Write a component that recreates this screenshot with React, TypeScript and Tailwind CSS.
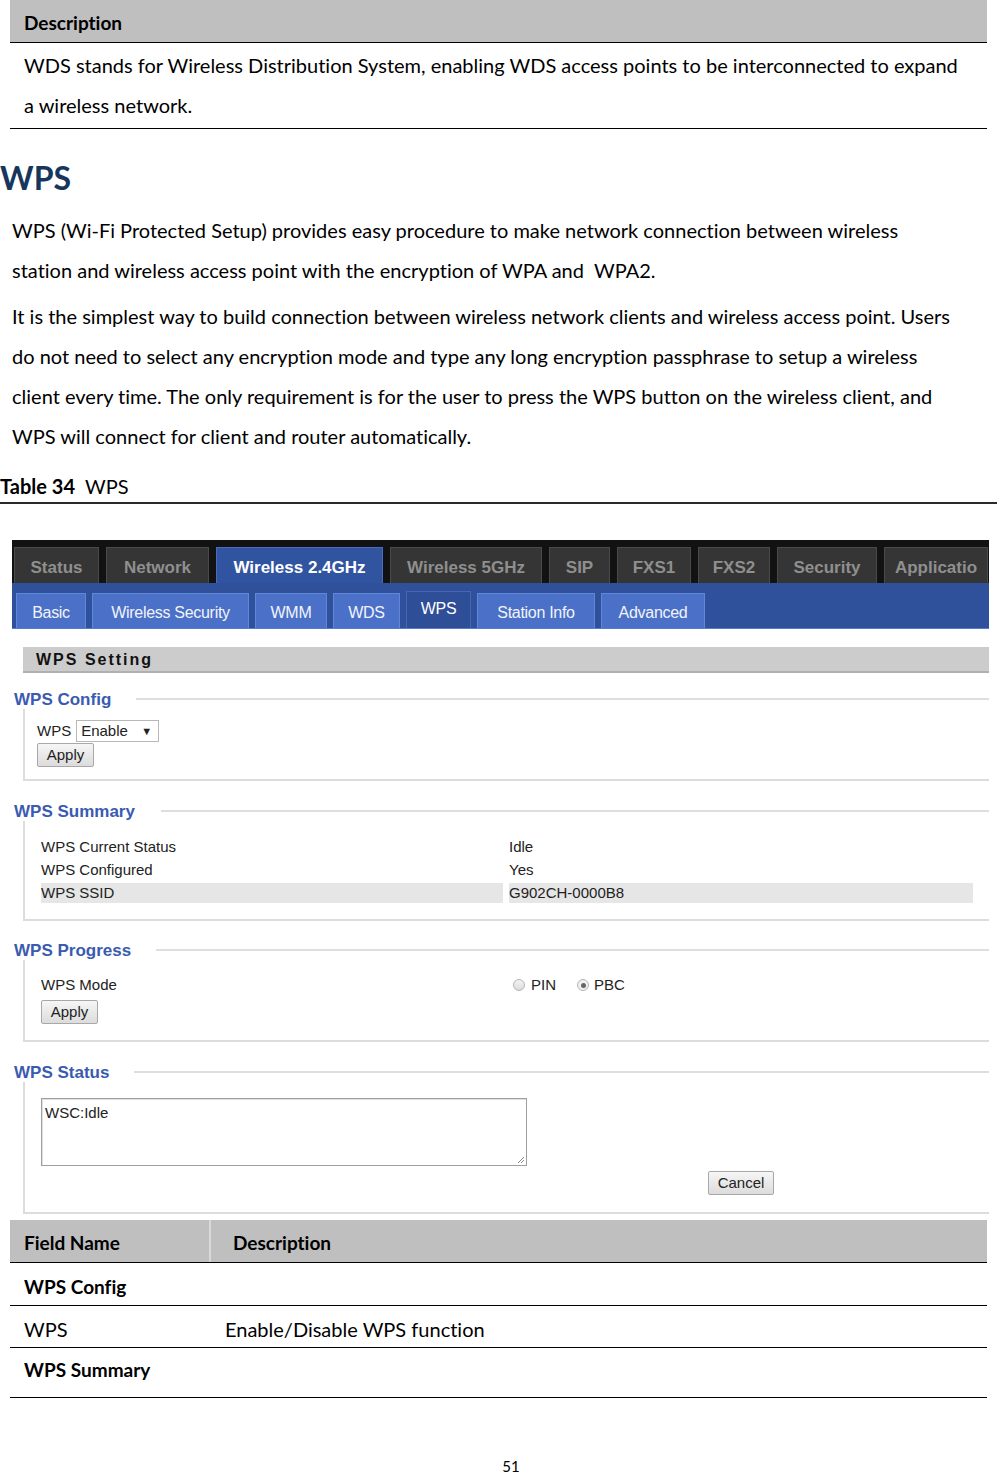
import React from "react"

const doc = { fontFamily: "Lato, 'Noto Sans', sans-serif" }
const ui = { fontFamily: "'Liberation Sans', Arial, sans-serif" }

const topTabs = [
  { label: "Status", w: "w-[85px]" },
  { label: "Network", w: "w-[103px]" },
  { label: "Wireless 2.4GHz", w: "w-[167px]", active: true },
  { label: "Wireless 5GHz", w: "w-[152px]" },
  { label: "SIP", w: "w-[61px]" },
  { label: "FXS1", w: "w-[74px]" },
  { label: "FXS2", w: "w-[72px]" },
  { label: "Security", w: "w-[100px]" },
  { label: "Applicatio", w: "w-[104px]" },
]

const subTabs = [
  { label: "Basic", w: "w-[70px]" },
  { label: "Wireless Security", w: "w-[157px]" },
  { label: "WMM", w: "w-[72px]" },
  { label: "WDS", w: "w-[67px]" },
  { label: "WPS", w: "w-[65px]", active: true },
  { label: "Station Info", w: "w-[118px]" },
  { label: "Advanced", w: "w-[104px]" },
]

function Legend({ title, lineGap }: { title: string; lineGap: string }) {
  return (
    <div className="flex items-center h-[20px]">
      <span className="pl-[2px] text-[17px] font-bold text-[#3a5bb0] leading-none">{title}</span>
      <div className={`flex-1 h-[2px] bg-[#dedede] ${lineGap}`}></div>
    </div>
  )
}

function Btn({ label, w }: { label: string; w: string }) {
  return (
    <div
      className={`h-[24px] ${w} flex items-center justify-center border border-[#a8a8a8] bg-gradient-to-b from-[#f6f6f6] to-[#dcdcdc] text-[15px] text-[#222] rounded-[2px]`}
    >
      {label}
    </div>
  )
}

function Screenshot() {
  return (
    <div className="ml-[12px] w-[977px] overflow-hidden text-[#222]" style={ui}>
      {/* top nav */}
      <div className="bg-[#121212] h-[43px] pt-[7px] pl-[2px] flex gap-[7px]">
        {topTabs.map((t) => (
          <div
            key={t.label}
            className={`${t.w} shrink-0 h-[36px] flex items-center justify-center pt-[4px] text-[17px] font-bold whitespace-nowrap border-t border-l border-r ${
              t.active
                ? "bg-[#3154a0] border-[#4a6cc0] text-white"
                : "bg-[#353535] border-[#4a4a4a] text-[#8f8f8f]"
            }`}
          >
            {t.label}
          </div>
        ))}
      </div>
      <div className="bg-[#2f519c] h-[46px] pt-[10px] pl-[4px] flex gap-[6px] border-b border-[#5a7ccc]">
        {subTabs.map((t) => (
          <div
            key={t.label}
            className={`${t.w} shrink-0 h-[35px] flex items-center justify-center text-[16px] tracking-[-0.3px] whitespace-nowrap border-t border-l border-r ${
              t.active
                ? "bg-[#2e4e98] border-[#4665b5] text-white -mt-[2px] h-[37px] pb-[2px]"
                : "bg-[#4a70c8] border-[#6088d8] text-[#f2f4fa] pt-[3px]"
            }`}
          >
            {t.label}
          </div>
        ))}
      </div>

      {/* WPS Setting bar */}
      <div className="mt-[18px] ml-[11px] h-[26px] bg-[#cccccc] border-b-2 border-[#b0b0b0] flex items-center pl-[13px] pt-[2px] text-[16px] font-bold tracking-[2px] text-[#111]">
        WPS Setting
      </div>

      {/* WPS Config */}
      <div className="mt-[16px]">
        <Legend title="WPS Config" lineGap="ml-[25px]" />
        <div className="ml-[11px] border-l-2 border-b-2 border-[#dcdcdc] pl-[12px] pt-[11px] h-[72px]">
          <div className="flex items-center h-[22px] text-[15px]">
            <span>WPS</span>
            <div className="ml-[5px] w-[83px] h-[22px] border border-[#b8b8b8] bg-white flex items-center justify-between pl-[4px] pr-[6px]">
              <span>Enable</span>
              <span className="text-[11px]">▼</span>
            </div>
          </div>
          <div className="mt-[1px]">
            <Btn label="Apply" w="w-[57px]" />
          </div>
        </div>
      </div>

      {/* WPS Summary */}
      <div className="mt-[20px]">
        <Legend title="WPS Summary" lineGap="ml-[26px]" />
        <div className="ml-[11px] border-l-2 border-b-2 border-[#dcdcdc] pl-[16px] pt-[15px] h-[100px] text-[15px]">
          <div className="flex h-[23px] items-center">
            <span className="w-[468px]">WPS Current Status</span>
            <span>Idle</span>
          </div>
          <div className="flex h-[23px] items-center">
            <span className="w-[468px]">WPS Configured</span>
            <span>Yes</span>
          </div>
          <div className="flex h-[20px] mt-[1px] items-center w-[932px]">
            <span className="w-[462px] h-full bg-[#e6e6e6] flex items-center">WPS SSID</span>
            <span className="ml-[6px] flex-1 h-full bg-[#e6e6e6] flex items-center">G902CH-0000B8</span>
          </div>
        </div>
      </div>

      {/* WPS Progress */}
      <div className="mt-[19px]">
        <Legend title="WPS Progress" lineGap="ml-[25px]" />
        <div className="ml-[11px] border-l-2 border-b-2 border-[#dcdcdc] pl-[16px] pt-[15px] h-[82px] text-[15px]">
          <div className="flex h-[20px] items-center">
            <span className="w-[472px]">WPS Mode</span>
            <span className="w-[12px] h-[12px] rounded-full border border-[#b5b5b5] bg-gradient-to-b from-[#f4f4f4] to-[#dcdcdc]"></span>
            <span className="ml-[6px]">PIN</span>
            <span className="ml-[21px] w-[12px] h-[12px] rounded-full border border-[#b5b5b5] bg-[#f0f0f0] flex items-center justify-center">
              <span className="w-[5px] h-[5px] rounded-full bg-[#666]"></span>
            </span>
            <span className="ml-[5px]">PBC</span>
          </div>
          <div className="mt-[5px]">
            <Btn label="Apply" w="w-[57px]" />
          </div>
        </div>
      </div>

      {/* WPS Status */}
      <div className="mt-[20px]">
        <Legend title="WPS Status" lineGap="ml-[25px]" />
        <div className="ml-[11px] border-l-2 border-b-2 border-[#dcdcdc] pl-[16px] pt-[16px] h-[132px] text-[15px]">
          <div className="relative w-[486px] h-[68px] border border-[#a0a0a0] shadow-[inset_1px_1px_0_#e0e0e0] pl-[3px] pt-[3px]">
            WSC:Idle
            <svg className="absolute right-[1px] bottom-[1px]" width="10" height="10" viewBox="0 0 10 10">
              <path d="M9 3 L3 9 M9 6 L6 9" stroke="#888" strokeWidth="1" />
            </svg>
          </div>
          <div className="mt-[5px] ml-[667px]">
            <Btn label="Cancel" w="w-[66px]" />
          </div>
        </div>
      </div>
    </div>
  )
}

export default function App() {
  return (
    <div className="w-[997px] bg-white text-black relative [font-variant-ligatures:none]" style={doc}>
      {/* previous table tail */}
      <div className="mx-[10px]">
        <div className="h-[43px] bg-[#bfbfbf] border-b border-black flex items-center pl-[14px] pt-[4px] text-[19px] font-bold">
          Description
        </div>
        <div className="pl-[14px] pt-[2px] pb-[3px] text-[20px] leading-[40px] border-b border-black">
          <div>WDS stands for Wireless Distribution System, enabling WDS access points to be interconnected to expand</div>
          <div>a wireless network.</div>
        </div>
      </div>

      <h1 className="mt-[29px] text-[32px] leading-[40px] font-bold text-[#17365d]">WPS</h1>

      <div className="pl-[12px] text-[20px] leading-[40px] mt-[12px]">
        <p>WPS (Wi-Fi Protected Setup) provides easy procedure to make network connection between wireless</p>
        <p>station and wireless access point with the encryption of WPA and&nbsp; WPA2.</p>
        <p className="mt-[6px]">It is the simplest way to build connection between wireless network clients and wireless access point. Users</p>
        <p>do not need to select any encryption mode and type any long encryption passphrase to setup a wireless</p>
        <p>client every time. The only requirement is for the user to press the WPS button on the wireless client, and</p>
        <p>WPS will connect for client and router automatically.</p>
      </div>

      <div className="mt-[18px] text-[20px] leading-[24px]">
        <span className="font-bold">Table 34</span>&nbsp; WPS
      </div>
      <div className="mt-[4px] h-[2px] bg-[#2a2a2a]"></div>

      <div className="mt-[36px]">
        <Screenshot />
      </div>

      {/* field table */}
      <div className="mx-[10px] mt-[6px] text-[20px]">
        <div className="h-[43px] bg-[#bfbfbf] border-b border-black flex items-center font-bold text-[19px]">
          <div className="w-[201px] pl-[14px] pt-[4px] h-full flex items-center border-r-2 border-[#d9d9d9]">Field Name</div>
          <div className="pl-[22px] pt-[4px]">Description</div>
        </div>
        <div className="h-[43px] border-b border-black flex items-center pt-[6px] pl-[14px] font-bold text-[19px]">WPS Config</div>
        <div className="h-[42px] border-b border-black flex items-center pt-[5px]">
          <div className="w-[215px] pl-[14px]">WPS</div>
          <div>Enable/Disable WPS function</div>
        </div>
        <div className="h-[50px] border-b border-black flex items-center pl-[14px] pb-[4px] font-bold text-[19px]">WPS Summary</div>
      </div>

      <div className="h-[78px] flex items-end justify-center">
        <span className="text-[15px] leading-[20px] pl-[25px]">51</span>
      </div>
    </div>
  )
}
